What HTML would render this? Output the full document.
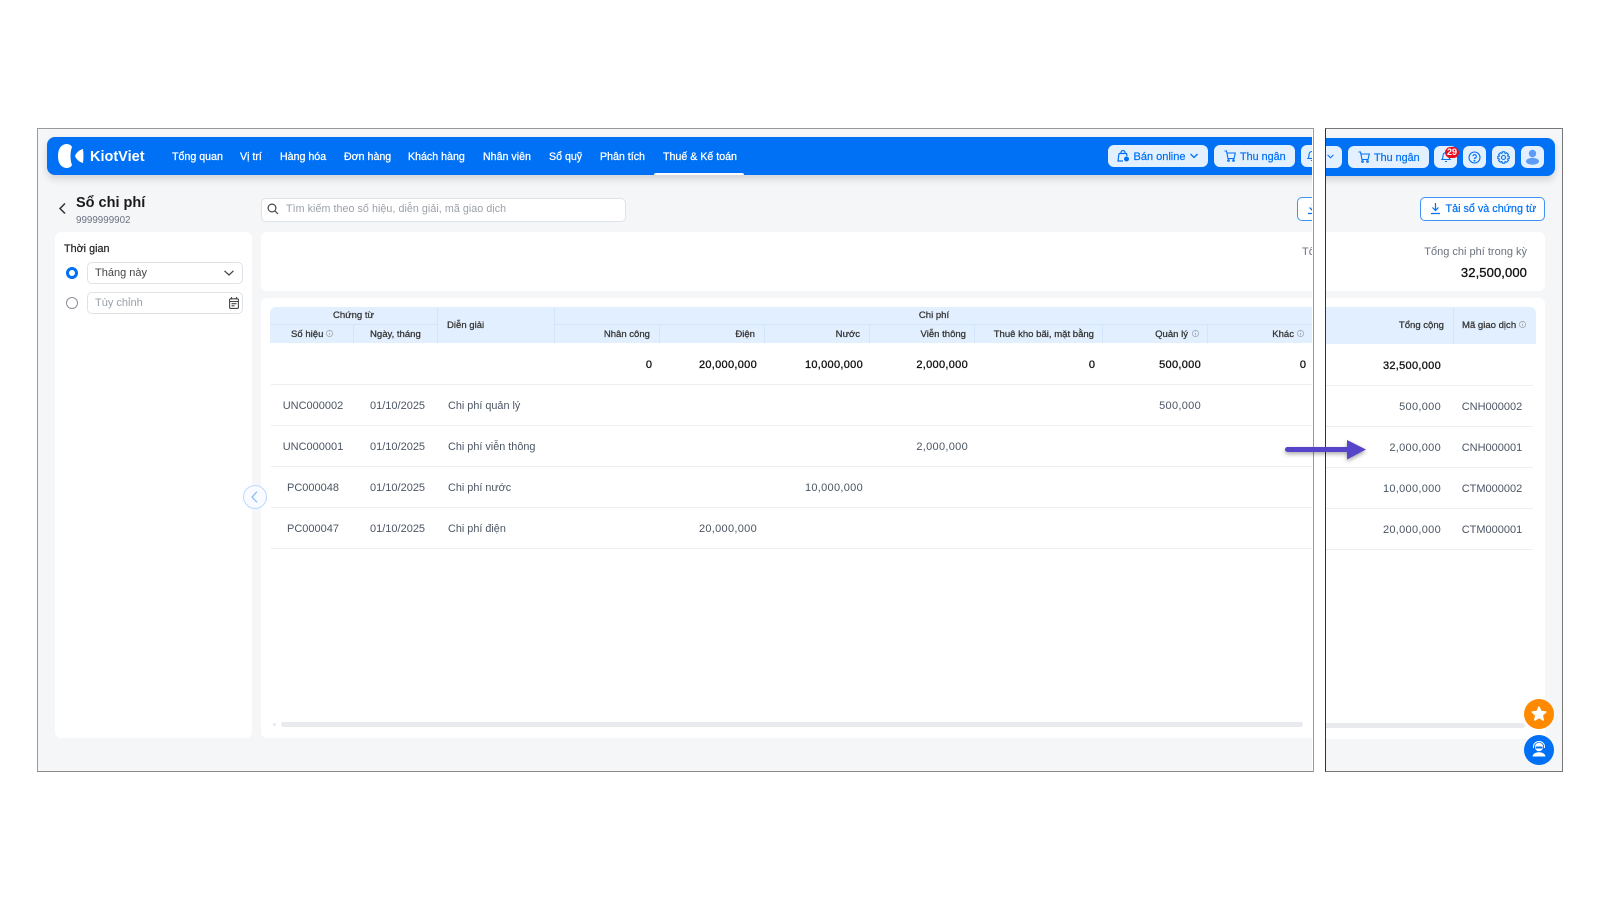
<!DOCTYPE html>
<html lang="vi">
<head>
<meta charset="utf-8">
<title>Sổ chi phí</title>
<style>
html,body{margin:0;padding:0;background:#fff;width:1600px;height:900px;overflow:hidden}
body{font-family:"Liberation Sans","Noto Sans CJK SC",sans-serif;position:relative;filter:blur(.3px)}
.clip{position:absolute;overflow:hidden;background:#f5f6f8;top:128px;height:643px}
.in{position:absolute;top:-128px;width:1600px;height:900px}
.a{position:absolute}
.t{position:absolute;white-space:nowrap;line-height:14px;font-size:11px;color:#4b5563;transform:translateY(1px)}
.n{color:#fff;-webkit-text-stroke:.25px #fff;top:149px;font-size:10.650px}
.h{color:#333;font-size:9.550px;-webkit-text-stroke:.25px #333}
.b{color:#111;-webkit-text-stroke:.3px #111}
.v{letter-spacing:.3px}
.d{font-size:10.850px}
.card{position:absolute;background:#fff;border-radius:6px}
.btn{position:absolute;background:#e3f0ff;border-radius:6px}
.bl{color:#0070f4;-webkit-text-stroke:.2px #0070f4}
.ln{position:absolute;height:1px;background:#eceef1}
.dv{position:absolute;width:1px;background:#d3e5fb}
svg{position:absolute;overflow:visible}
.nav{position:absolute;background:#0070f4;box-shadow:0 4px 8px rgba(0,0,0,.14)}
</style>
</head>
<body>

<!-- LEFT PANEL -->
<div class="clip" style="left:38px;width:1274px">
<div class="in" style="left:-38px">
  <div class="nav" style="left:47px;top:137px;width:1400px;height:38px;border-radius:8px"></div>
  <svg style="left:0;top:0" width="160" height="180" viewBox="0 0 160 180"><path fill="#fff" d="M66 144C60 145 58 150 58 156C58 162 60 167 66 168C69 168 71 167 72 165C70 160 70 152 72 147C71 145 69 144 66 144Z"/><path fill="#fff" d="M83 149C79 150 76 153 75 156C76 159 79 162 83 163C83.600 158 83.600 154 83 149Z"/></svg>
  <span class="t" style="left:90px;top:148px;line-height:16px;font-size:14.500px;font-weight:700;color:#fff">KiotViet</span>
  <span class="t n" style="left:172px">Tổng quan</span>
  <span class="t n" style="left:240px">Vị trí</span>
  <span class="t n" style="left:280px">Hàng hóa</span>
  <span class="t n" style="left:344px">Đơn hàng</span>
  <span class="t n" style="left:408px">Khách hàng</span>
  <span class="t n" style="left:483px">Nhân viên</span>
  <span class="t n" style="left:549px">Sổ quỹ</span>
  <span class="t n" style="left:600px">Phân tích</span>
  <span class="t n" style="left:663px">Thuế &amp; Kế toán</span>
  <div class="a" style="left:654px;top:173px;width:90px;height:2px;background:#fff;border-radius:2px 2px 0 0"></div>

  <div class="btn" style="left:1108px;top:145px;width:100px;height:22px"></div>
  <svg style="left:1117px;top:149px" width="13" height="14" viewBox="0 0 13 14" fill="none" stroke="#0070f4" stroke-width="1.200"><path d="M2 4.500H9.500L10 7M2 4.500L1 12H6M4 4.500V3.500A2 2 0 0 1 8 3.500V4.500"/><circle cx="9.500" cy="10" r="2.500" fill="#0070f4" stroke="none"/></svg>
  <span class="t bl" style="left:1133.500px;top:149px">Bán online</span>
  <svg style="left:1190px;top:153px" width="8" height="6" viewBox="0 0 8 6" fill="none" stroke="#0070f4" stroke-width="1.300"><path d="M.5 1L4 4.500L7.500 1"/></svg>

  <div class="btn" style="left:1214px;top:145px;width:81px;height:22px"></div>
  <svg style="left:1224px;top:150px" width="12" height="12" viewBox="0 0 12 12" fill="none" stroke="#0070f4" stroke-width="1.100"><path d="M.5 1H2.500L4 8.500H10L11.300 3H3"/><circle cx="4.500" cy="10.500" r=".8"/><circle cx="9.500" cy="10.500" r=".8"/></svg>
  <span class="t bl" style="left:1240px;top:149px;font-size:10.800px">Thu ngân</span>

  <div class="btn" style="left:1301px;top:145px;width:40px;height:22px"></div>
  <svg style="left:1307px;top:150px" width="10" height="12" viewBox="0 0 10 12" fill="none" stroke="#0070f4" stroke-width="1.100"><path d="M1 8.500C2 7.500 2 6 2 4.500A3 3 0 0 1 8 4.500C8 6 8 7.500 9 8.500ZM4 10.500H6"/></svg>

  <svg style="left:59px;top:203px" width="7" height="11" viewBox="0 0 7 11" fill="none" stroke="#333" stroke-width="1.500"><path d="M6 .5L1 5.500L6 10.500"/></svg>
  <span class="t" style="left:76px;top:193px;line-height:18px;font-size:14.500px;font-weight:700;color:#1a1a1a">Sổ chi phí</span>
  <span class="t" style="left:76px;top:213px;font-size:9.800px;color:#6b7280">9999999902</span>

  <div class="a" style="left:261px;top:198px;width:363px;height:22px;background:#fff;border:1px solid #dfe2e7;border-radius:5px"></div>
  <svg style="left:267px;top:203px" width="12" height="12" viewBox="0 0 12 12" fill="none" stroke="#444" stroke-width="1.200"><circle cx="5" cy="5" r="3.900"/><path d="M8 8L11 11"/></svg>
  <span class="t" style="left:286px;top:201px;color:#9aa0a9;font-size:10.700px;letter-spacing:.06px">Tìm kiếm theo số hiệu, diễn giải, mã giao dịch</span>

  <div class="a" style="left:1297px;top:197px;width:100px;height:22px;background:#fff;border:1px solid #3f93f7;border-radius:5px"></div>
  <svg style="left:1308px;top:203px" width="9" height="12" viewBox="0 0 9 12" fill="none" stroke="#0070f4" stroke-width="1.200"><path d="M4.500 0V7.500M1.500 4.500L4.500 7.500L7.500 4.500M0 10.500H9"/></svg>

  <!-- sidebar -->
  <div class="card" style="left:55px;top:232px;width:197px;height:506px"></div>
  <span class="t" style="left:64px;top:241px;font-size:10.800px;color:#222;-webkit-text-stroke:.2px #222">Thời gian</span>
  <div class="a" style="left:66px;top:267px;width:12px;height:12px;box-sizing:border-box;border:3.500px solid #0070f4;border-radius:50%;background:#fff"></div>
  <div class="a" style="left:87px;top:262px;width:154px;height:20px;border:1px solid #dfe2e7;border-radius:5px;background:#fff"></div>
  <span class="t" style="left:95px;top:265px;color:#444">Tháng này</span>
  <svg style="left:224px;top:270px" width="10" height="6" viewBox="0 0 10 6" fill="none" stroke="#444" stroke-width="1.200"><path d="M.5 .8L5 5L9.500 .8"/></svg>
  <div class="a" style="left:66px;top:297px;width:12px;height:12px;box-sizing:border-box;border:1px solid #8b9098;border-radius:50%;background:#fff"></div>
  <div class="a" style="left:87px;top:292px;width:154px;height:20px;border:1px solid #dfe2e7;border-radius:5px;background:#fff"></div>
  <span class="t" style="left:95px;top:295px;color:#9aa0a9">Tùy chỉnh</span>
  <svg style="left:229px;top:297px" width="10" height="12" viewBox="0 0 10 12" fill="none" stroke="#444" stroke-width="1.100"><rect x=".6" y="1.800" width="8.800" height="9.600" rx="1"/><path d="M.6 4.500H9.400M2.500 0V2.500M7.500 0V2.500M2.500 6.700H7.500M2.500 8.800H5.500"/></svg>

  <!-- collapse -->
  <div class="a" style="left:243px;top:485px;width:22px;height:22px;border:1px solid #bcd9ff;border-radius:50%;background:#f8fbff;z-index:3"></div>
  <svg style="left:251px;top:491px;z-index:4" width="7" height="12" viewBox="0 0 7 12" fill="none" stroke="#8dbdf9" stroke-width="1.300"><path d="M6 .7L1 6L6 11.300"/></svg>

  <!-- summary -->
  <div class="card" style="left:261px;top:232px;width:1200px;height:59px"></div>
  <span class="t" style="left:1302px;top:244px;color:#6b7280">Tổng chi phí trong kỳ</span>

  <!-- table card -->
  <div class="card" style="left:261px;top:298px;width:1200px;height:440px"></div>
  <div class="a" style="left:270px;top:307px;width:1200px;height:36px;background:#e2effe;border-radius:6px 0 0 0"></div>
  <div class="a" style="left:270px;top:324px;width:167px;height:1px;background:#d3e5fb"></div>
  <div class="a" style="left:554px;top:324px;width:900px;height:1px;background:#d3e5fb"></div>
  <div class="dv" style="left:353px;top:324px;height:19px"></div>
  <div class="dv" style="left:437px;top:307px;height:36px"></div>
  <div class="dv" style="left:554px;top:307px;height:36px"></div>
  <div class="dv" style="left:659px;top:324px;height:19px"></div>
  <div class="dv" style="left:764px;top:324px;height:19px"></div>
  <div class="dv" style="left:869px;top:324px;height:19px"></div>
  <div class="dv" style="left:974px;top:324px;height:19px"></div>
  <div class="dv" style="left:1102px;top:324px;height:19px"></div>
  <div class="dv" style="left:1207px;top:324px;height:19px"></div>

  <span class="t h" style="left:270px;width:167px;text-align:center;top:308px">Chứng từ</span>
  <span class="t h" style="left:291px;top:327px">Số hiệu</span>
  <svg style="left:326px;top:330px" width="7" height="7" viewBox="0 0 7 7" fill="none" stroke="#9aa0a9" stroke-width=".7"><circle cx="3.500" cy="3.500" r="3.100"/><path d="M3.500 3V5.300M3.500 1.600V2.300"/></svg>
  <span class="t h" style="left:370px;top:327px">Ngày, tháng</span>
  <span class="t h" style="left:447px;top:318px">Diễn giải</span>
  <span class="t h" style="left:554px;width:760px;text-align:center;top:308px">Chi phí</span>
  <span class="t h" style="right:950px;top:327px">Nhân công</span>
  <span class="t h" style="right:845px;top:327px">Điện</span>
  <span class="t h" style="right:740px;top:327px">Nước</span>
  <span class="t h" style="right:634px;top:327px">Viễn thông</span>
  <span class="t h" style="right:506px;top:327px">Thuê kho bãi, mặt bằng</span>
  <span class="t h" style="right:412px;top:327px">Quản lý</span>
  <svg style="left:1192px;top:330px" width="7" height="7" viewBox="0 0 7 7" fill="none" stroke="#9aa0a9" stroke-width=".7"><circle cx="3.500" cy="3.500" r="3.100"/><path d="M3.500 3V5.300M3.500 1.600V2.300"/></svg>
  <span class="t h" style="right:306px;top:327px">Khác</span>
  <svg style="left:1297px;top:330px" width="7" height="7" viewBox="0 0 7 7" fill="none" stroke="#9aa0a9" stroke-width=".7"><circle cx="3.500" cy="3.500" r="3.100"/><path d="M3.500 3V5.300M3.500 1.600V2.300"/></svg>

  <span class="t b" style="right:948px;top:357px">0</span>
  <span class="t b v" style="right:843px;top:357px">20,000,000</span>
  <span class="t b v" style="right:737px;top:357px">10,000,000</span>
  <span class="t b v" style="right:632px;top:357px">2,000,000</span>
  <span class="t b" style="right:505px;top:357px">0</span>
  <span class="t b v" style="right:399px;top:357px">500,000</span>
  <span class="t b" style="right:294px;top:357px">0</span>

  <div class="ln" style="left:271px;top:384px;width:1200px"></div>
  <div class="ln" style="left:271px;top:425px;width:1200px"></div>
  <div class="ln" style="left:271px;top:466px;width:1200px"></div>
  <div class="ln" style="left:271px;top:507px;width:1200px"></div>
  <div class="ln" style="left:271px;top:548px;width:1200px"></div>

  <span class="t" style="left:271px;width:84px;text-align:center;top:398px">UNC000002</span>
  <span class="t" style="left:370px;top:398px">01/10/2025</span>
  <span class="t d" style="left:448px;top:398px">Chi phí quản lý</span>
  <span class="t v" style="right:399px;top:398px">500,000</span>

  <span class="t" style="left:271px;width:84px;text-align:center;top:439px">UNC000001</span>
  <span class="t" style="left:370px;top:439px">01/10/2025</span>
  <span class="t d" style="left:448px;top:439px">Chi phí viễn thông</span>
  <span class="t v" style="right:632px;top:439px">2,000,000</span>

  <span class="t" style="left:271px;width:84px;text-align:center;top:480px">PC000048</span>
  <span class="t" style="left:370px;top:480px">01/10/2025</span>
  <span class="t d" style="left:448px;top:480px">Chi phí nước</span>
  <span class="t v" style="right:737px;top:480px">10,000,000</span>

  <span class="t" style="left:271px;width:84px;text-align:center;top:521px">PC000047</span>
  <span class="t" style="left:370px;top:521px">01/10/2025</span>
  <span class="t d" style="left:448px;top:521px">Chi phí điện</span>
  <span class="t v" style="right:843px;top:521px">20,000,000</span>

  <div class="a" style="left:273px;top:723px;width:3px;height:3px;background:#e8eaee;border-radius:2px"></div>
  <div class="a" style="left:281px;top:722px;width:1022px;height:5px;background:#e8eaee;border-radius:3px"></div>
</div>
</div>

<!-- RIGHT PANEL -->
<div class="clip" style="left:1326px;width:236px">
<div class="in" style="left:-1326px">
  <div class="nav" style="left:1200px;top:138px;width:355px;height:38px;border-radius:0 8px 8px 0"></div>
  <div class="btn" style="left:1290px;top:146px;width:52px;height:22px"></div>
  <svg style="left:1327px;top:154px" width="7" height="5" viewBox="0 0 8 6" fill="none" stroke="#0070f4" stroke-width="1.300"><path d="M.5 1L4 4.500L7.500 1"/></svg>
  <div class="btn" style="left:1348px;top:146px;width:81px;height:22px"></div>
  <svg style="left:1358px;top:151px" width="12" height="12" viewBox="0 0 12 12" fill="none" stroke="#0070f4" stroke-width="1.100"><path d="M.5 1H2.500L4 8.500H10L11.300 3H3"/><circle cx="4.500" cy="10.500" r=".8"/><circle cx="9.500" cy="10.500" r=".8"/></svg>
  <span class="t bl" style="left:1374px;top:150px;font-size:10.800px">Thu ngân</span>

  <div class="btn" style="left:1434px;top:146px;width:23px;height:22px"></div>
  <svg style="left:1441px;top:151px" width="10" height="12" viewBox="0 0 10 12" fill="none" stroke="#0070f4" stroke-width="1.100"><path d="M1 8.500C2 7.500 2 6 2 4.500A3 3 0 0 1 8 4.500C8 6 8 7.500 9 8.500ZM4 10.500H6"/></svg>
  <div class="a" style="left:1445px;top:147px;width:14px;height:11px;background:#e8101e;border-radius:6px;color:#fff;font-size:9px;font-weight:700;line-height:11px;text-align:center">29</div>

  <div class="btn" style="left:1463px;top:146px;width:23px;height:22px"></div>
  <svg style="left:1468px;top:151px" width="13" height="13" viewBox="0 0 13 13" fill="none" stroke="#0070f4" stroke-width="1.100"><circle cx="6.500" cy="6.500" r="5.500"/><path d="M4.800 5.200A1.800 1.800 0 1 1 6.500 7.200V8"/><circle cx="6.500" cy="9.700" r=".4"/></svg>

  <div class="btn" style="left:1492px;top:146px;width:23px;height:22px"></div>
  <svg style="left:1497px;top:151px" width="13" height="13" viewBox="0 0 13 13" fill="none" stroke="#0070f4" stroke-width="1.100"><path d="M5.300 .8H7.700L8.100 2.500L9.700 1.800L11.400 3.500L10.500 5L12.200 5.400V7.600L10.500 8L11.400 9.500L9.700 11.200L8.100 10.500L7.700 12.200H5.300L4.900 10.500L3.300 11.200L1.600 9.500L2.500 8L.8 7.600V5.400L2.500 5L1.600 3.500L3.300 1.800L4.900 2.500Z"/><circle cx="6.500" cy="6.500" r="2"/></svg>

  <div class="btn" style="left:1521px;top:146px;width:23px;height:22px"></div>
  <svg style="left:1526px;top:149px" width="13" height="16" viewBox="0 0 13 16" fill="#5b9df6"><circle cx="6.500" cy="4.500" r="3.700"/><ellipse cx="6.500" cy="12.300" rx="6.500" ry="3.400"/></svg>

  <div class="a" style="left:1420px;top:197px;width:123px;height:22px;background:#fff;border:1px solid #3f93f7;border-radius:5px"></div>
  <svg style="left:1431px;top:203px" width="9" height="12" viewBox="0 0 9 12" fill="none" stroke="#0070f4" stroke-width="1.200"><path d="M4.500 0V7.500M1.500 4.500L4.500 7.500L7.500 4.500M0 10.500H9"/></svg>
  <span class="t bl" style="left:1445.500px;top:201px;font-size:10.800px">Tải sổ và chứng từ</span>

  <div class="card" style="left:1200px;top:232px;width:345px;height:59px"></div>
  <span class="t" style="right:73px;top:244px;color:#6b7280">Tổng chi phí trong kỳ</span>
  <span class="t b v" style="right:73px;top:265px;font-size:13px;letter-spacing:.1px">32,500,000</span>

  <div class="card" style="left:1200px;top:298px;width:345px;height:441px"></div>
  <div class="a" style="left:1200px;top:307px;width:336px;height:37px;background:#e2effe;border-radius:0 6px 0 0"></div>
  <div class="dv" style="left:1453px;top:307px;height:37px"></div>
  <span class="t h" style="right:156px;top:318px">Tổng cộng</span>
  <span class="t h" style="left:1462px;top:318px">Mã giao dịch</span>
  <svg style="left:1519px;top:321px" width="7" height="7" viewBox="0 0 7 7" fill="none" stroke="#9aa0a9" stroke-width=".7"><circle cx="3.500" cy="3.500" r="3.100"/><path d="M3.500 3V5.300M3.500 1.600V2.300"/></svg>

  <span class="t b v" style="right:159px;top:357.500px">32,500,000</span>

  <div class="ln" style="left:1200px;top:385px;width:333px"></div>
  <div class="ln" style="left:1200px;top:426px;width:333px"></div>
  <div class="ln" style="left:1200px;top:467px;width:333px"></div>
  <div class="ln" style="left:1200px;top:508px;width:333px"></div>
  <div class="ln" style="left:1200px;top:549px;width:333px"></div>

  <span class="t v" style="right:159px;top:398.500px">500,000</span>
  <span class="t" style="left:1453px;width:78px;text-align:center;top:398.500px">CNH000002</span>
  <span class="t v" style="right:159px;top:439.500px">2,000,000</span>
  <span class="t" style="left:1453px;width:78px;text-align:center;top:439.500px">CNH000001</span>
  <span class="t v" style="right:159px;top:480.500px">10,000,000</span>
  <span class="t" style="left:1453px;width:78px;text-align:center;top:480.500px">CTM000002</span>
  <span class="t v" style="right:159px;top:521.500px">20,000,000</span>
  <span class="t" style="left:1453px;width:78px;text-align:center;top:521.500px">CTM000001</span>

  <div class="a" style="left:1200px;top:723px;width:325px;height:5px;background:#e8eaee;border-radius:3px"></div>

  <div class="a" style="left:1524px;top:699px;width:30px;height:30px;background:#ff8a00;border-radius:50%"></div>
  <svg style="left:1531px;top:706px" width="16" height="15" viewBox="0 0 16 15"><path fill="#fff" stroke="#fff" stroke-width="1.500" stroke-linejoin="round" d="M8 1L10 5.500L14.800 6L11.200 9.200L12.200 14L8 11.500L3.800 14L4.800 9.200L1.200 6L6 5.500Z"/></svg>
  <div class="a" style="left:1524px;top:735px;width:30px;height:30px;background:#0070f4;border-radius:50%"></div>
  <svg style="left:1531px;top:741px" width="16" height="17" viewBox="0 0 16 17"><circle cx="8" cy="6" r="4.200" fill="#fff"/><path fill="none" stroke="#fff" stroke-width="1" d="M2.500 7V5.500A5.500 5 0 0 1 13.500 5.500V7"/><path fill="#0070f4" d="M4.600 5.500H11.400V7.500H4.600Z"/><path fill="#fff" d="M1.500 15.500C2 12.500 5 11.300 8 11.300S14 12.500 14.500 15.500Z"/></svg>
</div>
</div>

<!-- panel frames -->
<div class="a" style="left:37px;top:127.500px;width:1275px;height:642px;border:1.500px solid #9a9a9a;box-sizing:content-box;border-bottom-color:#8a8a8a"></div>
<div class="a" style="left:1324.500px;top:127.500px;width:236px;height:642px;border:1px solid #777;border-left:1.500px solid #333"></div>

<!-- arrow -->
<svg style="left:0;top:0;filter:drop-shadow(0 2px 2px rgba(0,0,0,.35))" width="1600" height="900" viewBox="0 0 1600 900"><path fill="#5645c8" d="M1287.500 447H1347V440L1366 449.500L1347 459.500V452H1287.500A2.500 2.500 0 0 1 1287.500 447Z"/></svg>

</body>
</html>
